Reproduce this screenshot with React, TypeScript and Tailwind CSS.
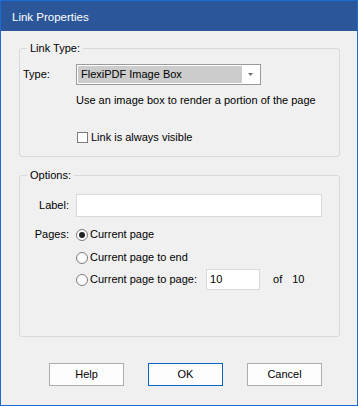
import React from "react";

const font = { fontFamily: '"Liberation Sans", Arial, sans-serif' };

function Radio({ checked, label }: { checked?: boolean; label: string }) {
  return (
    <div className="flex items-center h-[15px]">
      <span className="w-[12px] h-[12px] rounded-full border border-[#7a7a7a] bg-white flex items-center justify-center">
        {checked && <span className="w-[6px] h-[6px] rounded-full bg-[#222]" />}
      </span>
      <span className="ml-[2px]">{label}</span>
    </div>
  );
}

export default function App() {
  return (
    <div
      className="w-[358px] h-[406px] border border-[#1c6bd0] bg-[#f0f0f0] text-[11px] leading-[15px] text-black flex flex-col"
      style={font}
    >
      <div className="h-[30px] bg-[#2b579a] text-white text-[11.5px] pl-[11px] pt-[3px] flex items-center shrink-0">
        Link Properties
      </div>
      <div className="px-[18px] pt-[10px]">
        <fieldset className="border border-[#d9d9d9] rounded-[3px] px-[3px] pb-[11px] w-[321px]">
          <legend className="ml-[4px] px-[3px] leading-[15px]">Link Type:</legend>
          <div className="flex items-center h-[21px] mt-[8px]">
            <span className="w-[53px]">Type:</span>
            <div className="w-[185px] h-[21px] border border-[#9a9a9a] bg-white p-[1px] flex">
              <div className="w-[164px] bg-[#cccccc] pl-[3px] flex items-center">FlexiPDF Image Box</div>
              <div className="flex-1 flex items-center justify-center">
                <svg width="5" height="3" viewBox="0 0 5 3">
                  <path d="M0 0H5L2.5 3Z" fill="#707070" />
                </svg>
              </div>
            </div>
          </div>
          <div className="ml-[53px] mt-[8px]">Use an image box to render a portion of the page</div>
          <div className="ml-[54px] mt-[22px] flex items-center">
            <span className="w-[11px] h-[11px] border border-[#7a7a7a] bg-white" />
            <span className="ml-[3px]">Link is always visible</span>
          </div>
        </fieldset>

        <fieldset className="border border-[#d9d9d9] rounded-[3px] px-[3px] pb-[46px] w-[321px] mt-[11px]">
          <legend className="ml-[4px] px-[3px] leading-[15px]">Options:</legend>
          <div className="flex items-center mt-[11px]">
            <span className="w-[48px] text-right pr-[2px]">Label:</span>
            <div className="ml-[5px] w-[246px] h-[23px] border border-[#d9d9d9] bg-white" />
          </div>
          <div className="flex mt-[10px]">
            <span className="w-[48px] text-right pr-[2px]">Pages:</span>
            <div className="ml-[5px] flex flex-col">
              <Radio checked label="Current page" />
              <div className="mt-[8px]">
                <Radio label="Current page to end" />
              </div>
              <div className="mt-[4px] flex items-center">
                <Radio label="Current page to page:" />
                <div className="ml-[9px] w-[54px] h-[21px] border border-[#d9d9d9] bg-white pl-[3px] flex items-center">10</div>
                <span className="ml-[13px]">of</span>
                <span className="ml-[10px]">10</span>
              </div>
            </div>
          </div>
        </fieldset>
      </div>
      <div className="flex pl-[48px] gap-[24px] mt-[26px]">
        <button className="w-[75px] h-[23px] border border-[#adadad] bg-[#fdfdfd]">Help</button>
        <button className="w-[75px] h-[23px] border border-[#0a64c8] bg-[#fdfdfd]">OK</button>
        <button className="w-[75px] h-[23px] border border-[#adadad] bg-[#fdfdfd]">Cancel</button>
      </div>
    </div>
  );
}
